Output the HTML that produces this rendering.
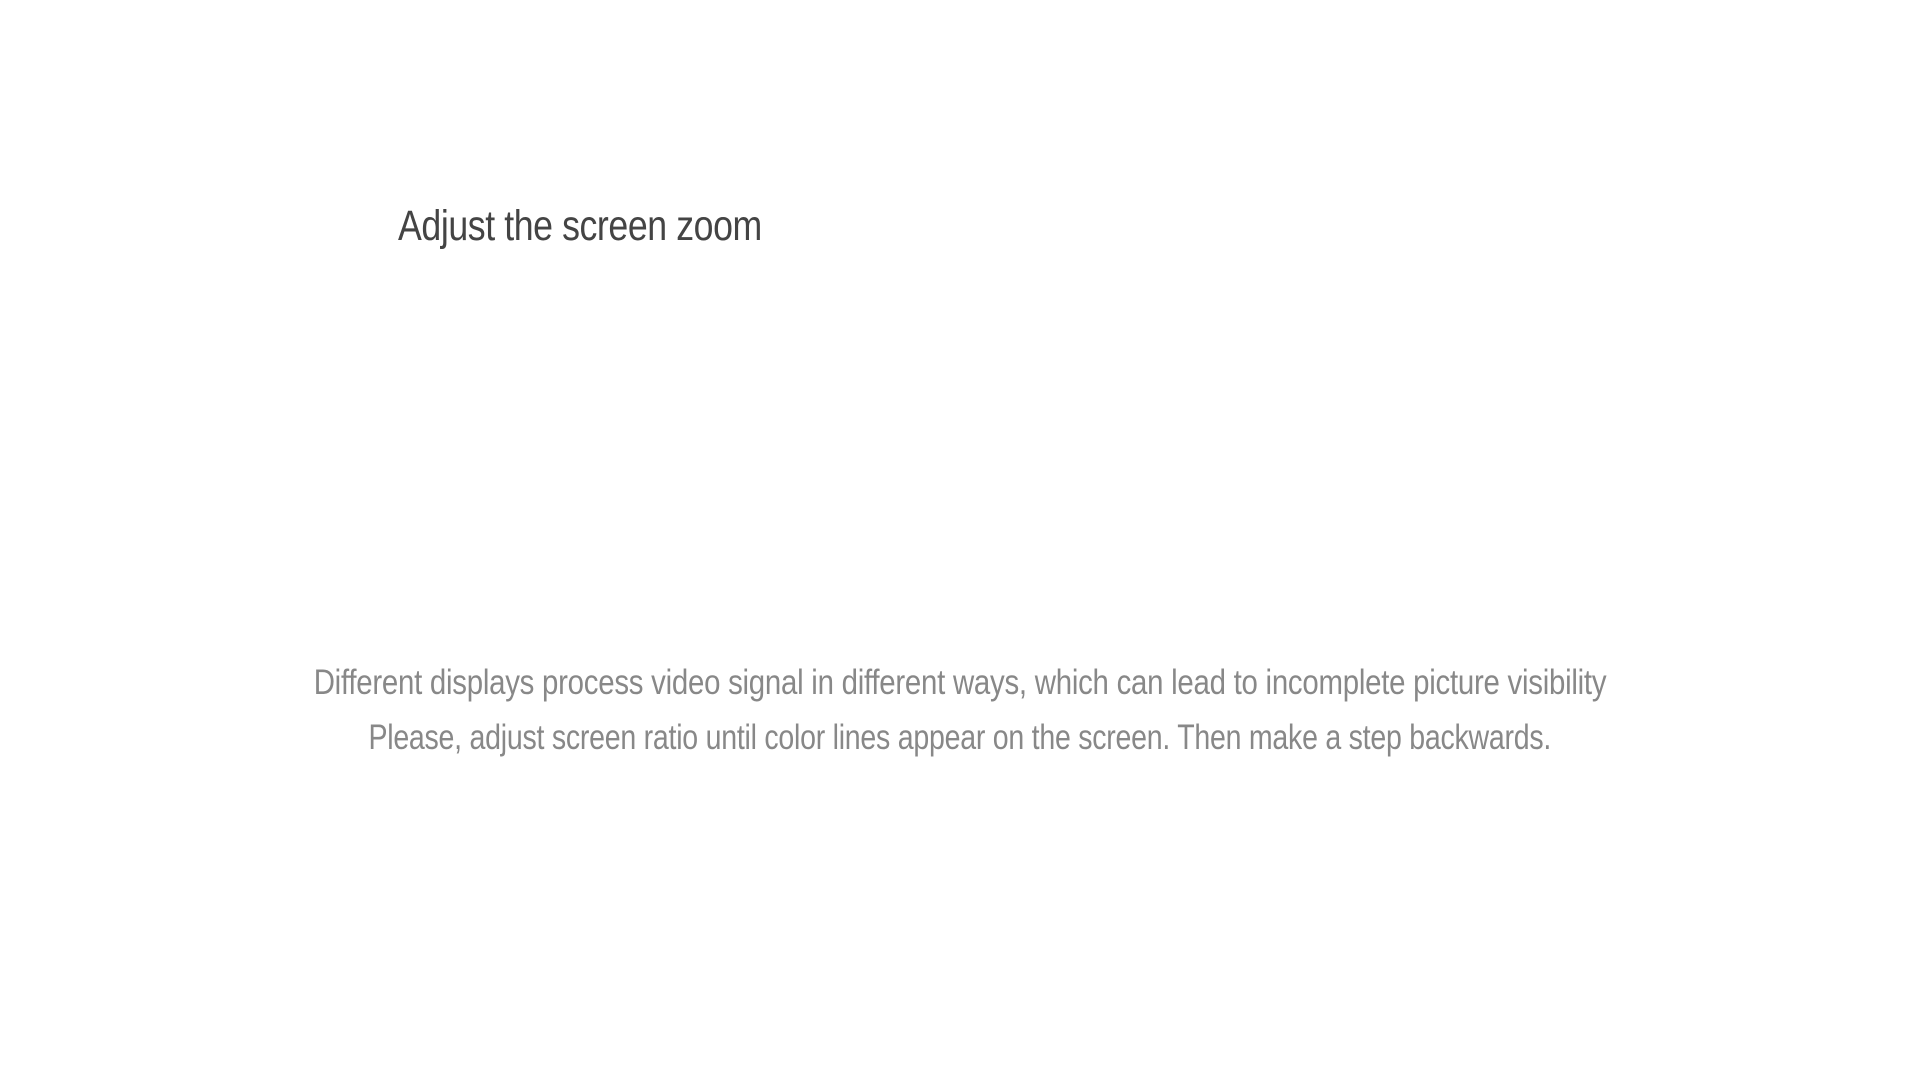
<!DOCTYPE html>
<html><head><meta charset="utf-8"><style>
html,body{margin:0;padding:0;width:1920px;height:1080px;background:#fff;overflow:hidden}
body{font-family:"Liberation Sans Narrow","Liberation Sans",sans-serif;position:relative}
.t{position:absolute;left:398px;top:202px;font-size:43px;color:#444;white-space:nowrap;letter-spacing:-0.5px;transform:scaleX(0.83);transform-origin:0 0}
.d{position:absolute;left:0;width:1920px;top:655px;text-align:center;font-size:35px;line-height:55px;color:#888;letter-spacing:-0.3px;transform:scaleX(0.84);transform-origin:960px 0}
.d span{display:inline-block;transform:scaleX(0.97)}
</style></head><body>
<div class="t">Adjust the screen zoom</div>
<div class="d">Different displays process video signal in different ways, which can lead to incomplete picture visibility<br><span>Please, adjust screen ratio until color lines appear on the screen. Then make a step backwards.</span></div>
</body></html>
